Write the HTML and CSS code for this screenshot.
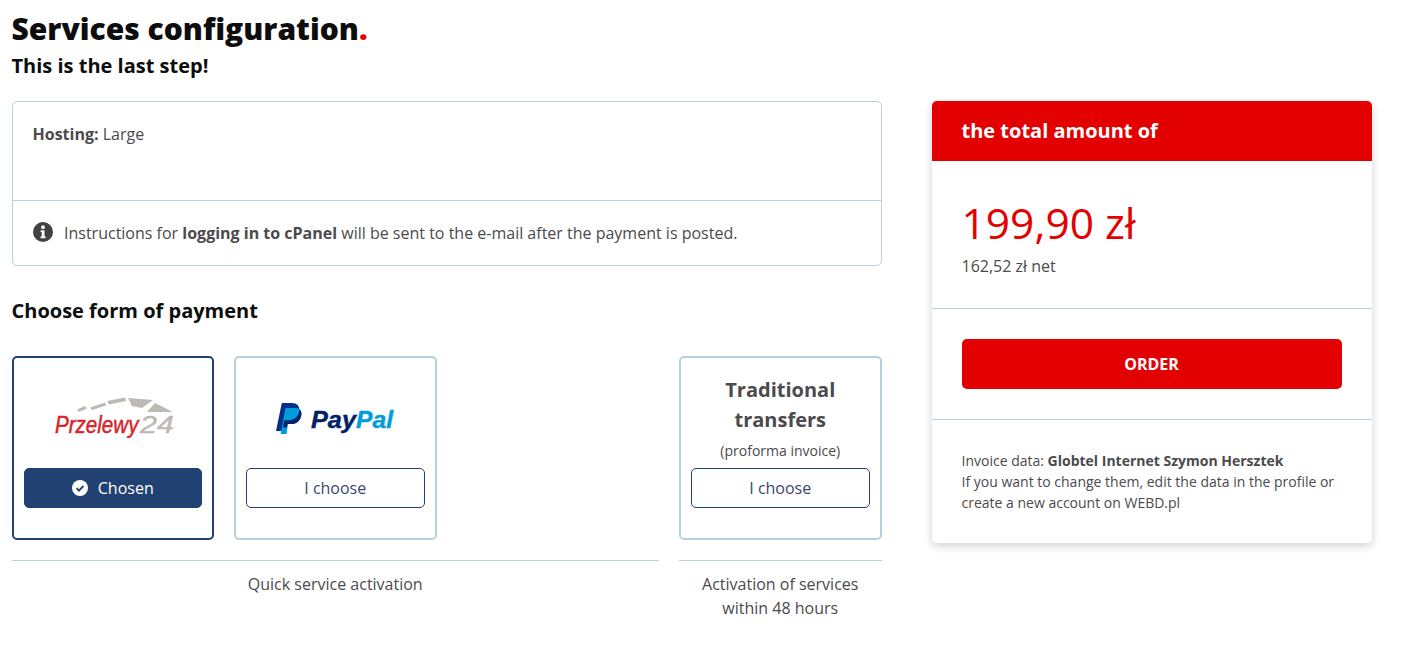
FILE: index.html
```html
<!DOCTYPE html>
<html lang="en">
<head>
<meta charset="utf-8">
<title>Services configuration</title>
<link rel="stylesheet" href="styles.css">
</head>
<body>
<header class="head">
  <h1 class="title">Services configuration<span class="dot">.</span></h1>
  <h2 class="subtitle">This is the last step!</h2>
</header>
<div class="layout">
  <main class="main">
    <section class="summary">
      <div class="summary-top"><b>Hosting:</b> Large</div>
      <div class="summary-note">
        <svg class="info-icon" viewBox="0 0 20 20" aria-hidden="true">
          <circle cx="10" cy="10" r="10" fill="#414042"/>
          <circle cx="10" cy="5.2" r="1.9" fill="#fff"/>
          <path d="M7.6 8.3h3.9v6.300h1.100v1.600H7.500v-1.600h1.200v-4.700H7.600z" fill="#fff"/>
        </svg>
        <span>Instructions for <b>logging in to cPanel</b> will be sent to the e-mail after the payment is posted.</span>
      </div>
    </section>
    <h3 class="pay-title">Choose form of payment</h3>
    <div class="pay-grid">
      <div class="pay-card pay-card-active">
        <div class="pay-logo">
          <svg class="p24" viewBox="0 -3 120 50">
            <path d="M24 18.500L32 15l2 2.500-8 3.500z M37 16.500L52 11.500l1 3-14 4.500z M54 10L72 6.500l1 3.500-17 3.500z M75 7l25 2-11 8-10-2z M102 12l18 9H94z" fill="#bdb9b3"/>
            <text transform="translate(2 42) scale(.875 1)" class="p24-red">Przelewy</text>
            <text transform="translate(87 42) scale(1.3 1)" class="p24-grey">24</text>
          </svg>
        </div>
        <button class="btn btn-chosen" type="button">
          <svg class="check-icon" viewBox="0 0 16 16" aria-hidden="true">
            <circle cx="8" cy="8" r="8" fill="#fff"/>
            <path d="M4.600 8.200l2.400 2.400 4.400-4.600" fill="none" stroke="#204172" stroke-width="1.900"/>
          </svg>
          Chosen
        </button>
      </div>
      <div class="pay-card">
        <div class="pay-logo">
          <svg class="pp" viewBox="0 -15 118 50">
            <path d="M5.800 0h10c5 0 8.200 3 7.400 7.800-1 6-4.800 9.400-10.500 9.400H8.800L7 28H0z" fill="#003087"/>
            <path d="M9.500 5h9.800c4.600 0 6.800 2.800 6 7.300-1 5.700-4.700 8.800-10 8.800h-3.300L10.500 31H4.700l.8-4.500z" fill="#009cde"/>
            <path d="M8.400 17.200h4.300c5.700 0 9.500-3.300 10.500-9.400 .1-.5 .1-.8 .1-1.200 1.600 1 2.500 3 2 5.700-1 5.700-4.700 8.800-10 8.800H11.500l-.6 3.500H7z" fill="#012169"/>
            <text x="35" y="25" class="pp-dark" textLength="45" lengthAdjust="spacingAndGlyphs">Pay</text>
            <text x="80" y="25" class="pp-light" textLength="37" lengthAdjust="spacingAndGlyphs">Pal</text>
          </svg>
        </div>
        <button class="btn btn-choose" type="button">I choose</button>
      </div>
      <div class="pay-card pay-card-third">
        <div class="pay-text">
          <div class="pay-text-title">Traditional transfers</div>
          <div class="pay-text-sub">(proforma invoice)</div>
        </div>
        <button class="btn btn-choose" type="button">I choose</button>
      </div>
      <div class="pay-foot pay-foot-wide">Quick service activation</div>
      <div class="pay-foot pay-foot-third">Activation of services within 48 hours</div>
    </div>
  </main>
  <aside class="total">
    <div class="total-head">the total amount of</div>
    <div class="total-price">
      <div class="price">199,90 zł</div>
      <div class="net">162,52 zł net</div>
    </div>
    <div class="total-action"><button class="btn-order" type="button">ORDER</button></div>
    <div class="total-invoice">Invoice data: <b>Globtel Internet Szymon Hersztek</b><br>If you want to change them, edit the data in the profile or create a new account on WEBD.pl</div>
  </aside>
</div>
</body>
</html>
```
FILE: styles.css
```css
* { box-sizing: border-box; }
html, body { margin: 0; padding: 0; }
body {
  font-family: "Open Sans", sans-serif;
  font-size: 16px;
  color: #4b4a4c;
  background: #fff;
  padding: 7px 12px 0 11.5px;
}
.title {
  margin: 0;
  font-size: 30px;
  line-height: 44px;
  font-weight: 800;
  color: #0d0d0d;
}
.dot { color: #e30000; }
.subtitle {
  margin: 0;
  font-size: 20px;
  line-height: 30px;
  font-weight: 700;
  color: #0d0d0d;
}
.layout {
  display: flex;
  gap: 50px;
  margin-top: 20px;
  align-items: flex-start;
}
.main { width: 870px; flex: none; }
.summary {
  border: 1px solid #b7d0df;
  border-radius: 5px;
}
.summary-top {
  height: 99px;
  padding: 20px 20px 0;
  line-height: 24px;
  border-bottom: 1px solid #b7d0df;
}
.summary-note {
  height: 64px;
  padding: 0 20px;
  display: flex;
  align-items: center;
  gap: 11.5px;
  line-height: 24px;
}
.info-icon { width: 20px; height: 20px; flex: none; margin-top: -2px; }
.pay-title {
  margin: 30px 0;
  font-size: 20px;
  line-height: 30px;
  font-weight: 700;
  color: #0d0d0d;
}
.pay-grid {
  display: grid;
  grid-template-columns: repeat(4, 1fr);
  column-gap: 20px;
  row-gap: 20px;
}
.pay-card {
  height: 184px;
  border: 2px solid #b7d0df;
  border-radius: 5px;
  padding: 0 10px;
  display: flex;
  flex-direction: column;
}
.pay-card-active { border-color: #204172; }
.pay-card-third { grid-column: 4; }
.pay-logo {
  height: 110px;
  display: flex;
  align-items: center;
  justify-content: center;
}
.p24 { width: 120px; height: 50px; }
.p24-red {
  font: italic 400 23.5px "Liberation Sans", sans-serif;
  fill: #d8232a;
  stroke: #d8232a;
  stroke-width: .5px;
}
.p24-grey {
  font: italic 400 23.5px "Liberation Sans", sans-serif;
  fill: #bdb9b3;
  stroke: #bdb9b3;
  stroke-width: .4px;
}
.pp { width: 118px; height: 50px; }
.pp-dark {
  font: italic 700 23px "Liberation Sans", sans-serif;
  fill: #012169;
  stroke: #012169;
  stroke-width: .4px;
}
.pp-light {
  font: italic 700 23px "Liberation Sans", sans-serif;
  fill: #009cde;
  stroke: #009cde;
  stroke-width: .4px;
}
.pay-text { height: 110px; text-align: center; padding-top: 17px; }
.pay-text-title {
  font-size: 20px;
  line-height: 30px;
  font-weight: 700;
  padding: 0 20px;
}
.pay-text-sub { font-size: 14px; line-height: 32px; }
.btn {
  height: 40px;
  width: 100%;
  border-radius: 5px;
  font-family: "Open Sans", sans-serif;
  font-size: 16px;
  display: flex;
  align-items: center;
  justify-content: center;
  padding: 0;
}
.btn-chosen {
  background: #204172;
  border: 1px solid #204172;
  color: #fff;
  gap: 10px;
}
.check-icon { width: 16px; height: 16px; }
.btn-choose {
  background: #fff;
  border: 1px solid #204172;
  color: #3a4770;
}
.pay-foot {
  border-top: 1px solid #b7d0df;
  padding-top: 11px;
  text-align: center;
  line-height: 24px;
}
.pay-foot-wide { grid-column: 1 / span 3; }
.pay-foot-third { grid-column: 4; padding-left: 15px; padding-right: 15px; }
.total {
  width: 440px;
  flex: none;
  border-radius: 5px;
  background: #fff;
  box-shadow: 0 3px 10px rgba(0, 0, 0, .18);
  overflow: hidden;
}
.total-head {
  background: #e30000;
  color: #fff;
  height: 60px;
  padding: 0 30px 2px;
  display: flex;
  align-items: center;
  font-size: 20px;
  font-weight: 700;
}
.total-price {
  height: 148px;
  padding: 32px 30px 0;
  border-bottom: 1px solid #b7d0df;
}
.price {
  color: #e30000;
  font-size: 42.5px;
  font-weight: 500;
  line-height: 60px;
}
.net { line-height: 24px; margin-top: 1px; }
.total-action {
  padding: 30px;
  border-bottom: 1px solid #b7d0df;
}
.btn-order {
  display: block;
  width: 100%;
  height: 50px;
  border: 0;
  border-radius: 5px;
  background: #e30000;
  color: #fff;
  font-family: "Open Sans", sans-serif;
  font-size: 16px;
  font-weight: 700;
}
.total-invoice {
  padding: 30px;
  font-size: 14px;
  line-height: 21px;
}
```
